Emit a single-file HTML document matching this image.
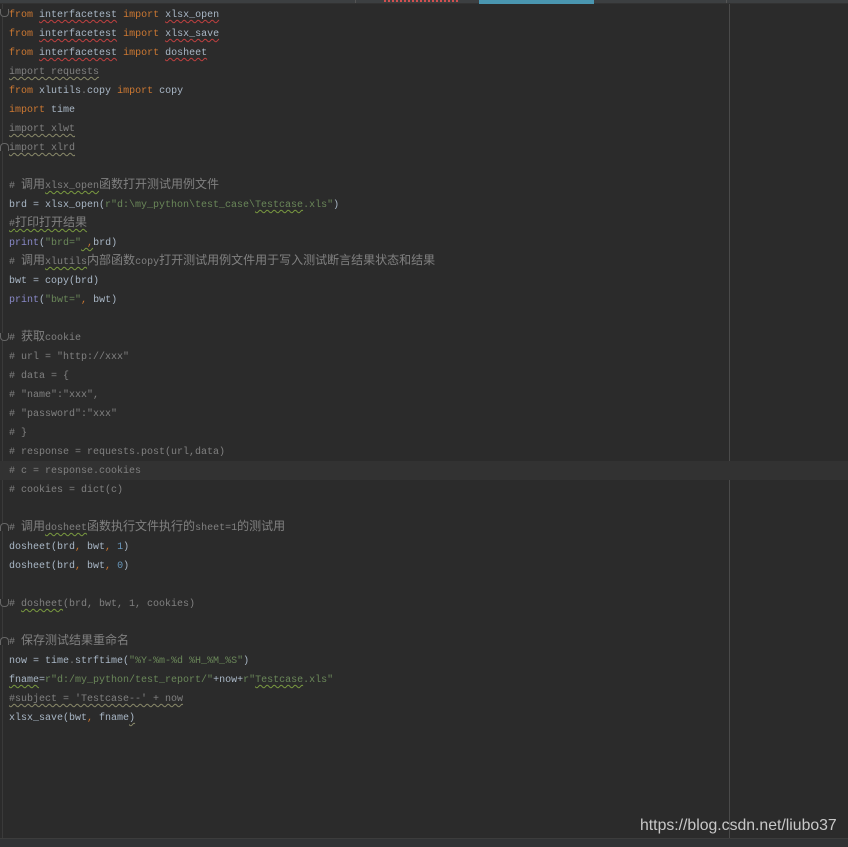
<!DOCTYPE html>
<html><head><meta charset="utf-8">
<style>
html,body{margin:0;padding:0;}
body{width:848px;height:846px;background:#2b2b2b;position:relative;overflow:hidden;}
.top{position:absolute;left:0;top:0;width:848px;height:3px;background:#3c3f41;}
.top2{position:absolute;left:0;top:3px;width:848px;height:1px;background:#323232;}
.tab{position:absolute;left:479px;top:0;width:115px;height:4px;background:#4a96b0;}
.red{position:absolute;left:384px;top:0;width:74px;height:2px;background:repeating-linear-gradient(90deg,#d05050 0 2px,transparent 2px 4px);}
.sep{position:absolute;top:0;width:1px;height:3px;background:#555;}
.gut{position:absolute;left:2px;top:4px;width:1px;height:834px;background:#3a3a3a;}
.margin{position:absolute;left:729px;top:4px;width:1px;height:834px;background:#4a4a4a;}
.bottom{position:absolute;left:0;top:838px;width:848px;height:8px;background:#313335;border-top:1px solid #3c3c3c;}
.hl{position:absolute;left:0;top:461px;width:848px;height:19px;background:#323232;}
.code{position:absolute;left:9px;top:6px;font-family:"Liberation Mono","Noto Sans CJK SC",monospace;font-size:10px;color:#a9b7c6;}
.code div{height:19px;line-height:19px;white-space:pre;overflow:visible;}
.k{color:#cc7832}.c{color:#808080}.s{color:#6a8759}.n{color:#6897bb}.p{color:#8888c6}
.z{font-family:"Noto Sans CJK SC",sans-serif;font-size:12px;line-height:10px;}
.w{text-decoration:underline wavy #c04040;text-decoration-thickness:1px;text-underline-offset:2px;}
.g{text-decoration:underline wavy #7a9a40;text-decoration-thickness:1px;text-underline-offset:2px;}
.u{text-decoration:underline wavy #8a8a6a;text-decoration-thickness:1px;text-underline-offset:2px;}
.wm{position:absolute;left:640px;top:817px;font-family:"Liberation Sans",sans-serif;font-size:15.8px;color:#c8c8c8;}
.fold{position:absolute;left:0;width:7px;height:7px;border:1px solid #666;border-top:none;border-radius:0 0 4px 4px;background:#2b2b2b;}
</style></head><body>
<div class="top"></div><div class="top2"></div>
<div class="sep" style="left:355px"></div><div class="sep" style="left:726px"></div>
<div class="red"></div><div class="tab"></div>
<div class="gut"></div><div class="margin"></div>
<div class="hl"></div>
<div class="fold" style="top:9px"></div>
<div class="fold" style="top:143px;transform:rotate(180deg)"></div>
<div class="fold" style="top:333px"></div>
<div class="fold" style="top:523px;transform:rotate(180deg)"></div>
<div class="fold" style="top:599px"></div>
<div class="fold" style="top:637px;transform:rotate(180deg)"></div>
<div class="code">
<div><span class="k">from</span> <span class="w">interfacetest</span> <span class="k">import</span> <span class="w">xlsx_open</span></div>
<div><span class="k">from</span> <span class="w">interfacetest</span> <span class="k">import</span> <span class="w">xlsx_save</span></div>
<div><span class="k">from</span> <span class="w">interfacetest</span> <span class="k">import</span> <span class="w">dosheet</span></div>
<div><span class="c u">import requests</span></div>
<div><span class="k">from</span> xlutils<span class="c">.</span>copy <span class="k">import</span> copy</div>
<div><span class="k">import</span> time</div>
<div><span class="c u">import xlwt</span></div>
<div><span class="c u">import xlrd</span></div>
<div></div>
<div><span class="c"># <span class="z">调用</span><span class="g">xlsx_open</span><span class="z">函数打开测试用例文件</span></span></div>
<div>brd = xlsx_open(<span class="s">r"d:\my_python\test_case\<span class="g">Testcase</span>.xls"</span>)</div>
<div><span class="c g">#<span class="z">打印打开结果</span></span></div>
<div><span class="p">print</span>(<span class="s">"brd="</span><span class="k g"> ,</span>brd)</div>
<div><span class="c"># <span class="z">调用</span><span class="g">xlutils</span><span class="z">内部函数</span>copy<span class="z">打开测试用例文件用于写入测试断言结果状态和结果</span></span></div>
<div>bwt = copy(brd)</div>
<div><span class="p">print</span>(<span class="s">"bwt="</span><span class="k">,</span> bwt)</div>
<div></div>
<div><span class="c"># <span class="z">获取</span>cookie</span></div>
<div><span class="c"># url = "http://xxx"</span></div>
<div><span class="c"># data = {</span></div>
<div><span class="c"># "name":"xxx",</span></div>
<div><span class="c"># "password":"xxx"</span></div>
<div><span class="c"># }</span></div>
<div><span class="c"># response = requests.post(url,data)</span></div>
<div><span class="c"># c = response.cookies</span></div>
<div><span class="c"># cookies = dict(c)</span></div>
<div></div>
<div><span class="c"># <span class="z">调用</span><span class="g">dosheet</span><span class="z">函数执行文件执行的</span>sheet=1<span class="z">的测试用</span></span></div>
<div>dosheet(brd<span class="k">,</span> bwt<span class="k">,</span> <span class="n">1</span>)</div>
<div>dosheet(brd<span class="k">,</span> bwt<span class="k">,</span> <span class="n">0</span>)</div>
<div></div>
<div><span class="c"># <span class="g">dosheet</span>(brd, bwt, 1, cookies)</span></div>
<div></div>
<div><span class="c"># <span class="z">保存测试结果重命名</span></span></div>
<div>now = time<span class="c">.</span>strftime(<span class="s">"%Y-%m-%d %H_%M_%S"</span>)</div>
<div><span class="g">fname</span>=<span class="s">r"d:/my_python/test_report/"</span>+now+<span class="s">r"<span class="g">Testcase</span>.xls"</span></div>
<div><span class="c u">#subject = 'Testcase--' + now</span></div>
<div>xlsx_save(bwt<span class="k">,</span> fname<span class="u">)</span></div>
</div>
<div class="bottom"></div>
<div class="wm">https://blog.csdn.net/liubo37</div>
</body></html>
